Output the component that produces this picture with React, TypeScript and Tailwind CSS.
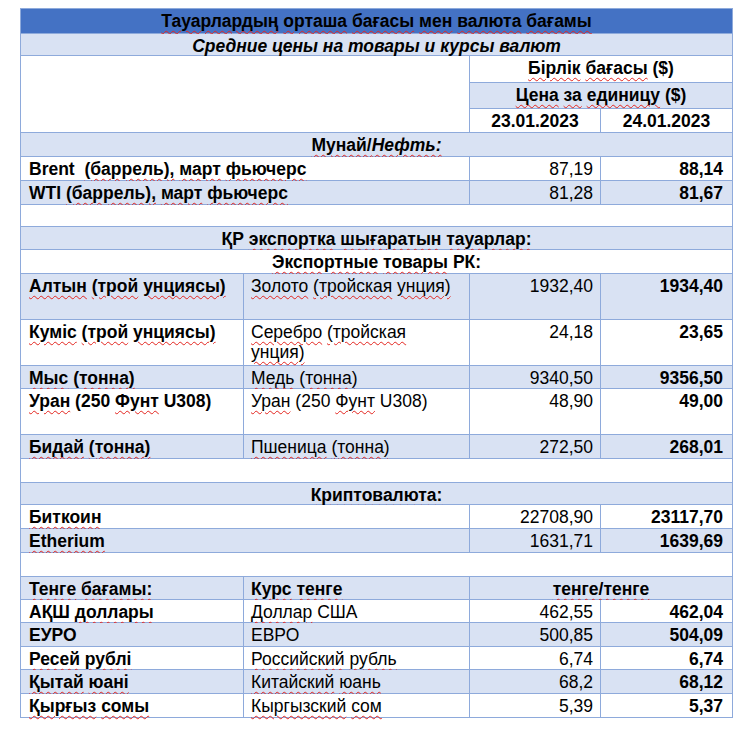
import type { ReactNode } from "react";
import clsx from "clsx";

// Word-style spell-check squiggle under any token that has a lowercase letter
function Sq({ text, plain = false }: { text: string; plain?: boolean }) {
  if (plain) return <>{text}</>;
  const parts = text.split(/(\s+)/);
  return (
    <>
      {parts.map((p, i) =>
        /[a-zа-яёәғқңөұүһі]/.test(p) && p !== "Brent" ? (
          <span
            key={i}
            className="underline decoration-wavy decoration-[#e3251f] decoration-1 underline-offset-[3px]"
          >
            {p}
          </span>
        ) : (
          <span key={i}>{p}</span>
        )
      )}
    </>
  );
}

function Cell({ children, className }: { children?: ReactNode; className?: string }) {
  return (
    <div className={clsx("pt-[2px] leading-[20px] whitespace-pre-wrap text-black", className)}>
      {children}
    </div>
  );
}

const L = "bg-[#d9e2f3]";
const W = "bg-white";

type Row = { a: string; b?: string; c: string; d: string };

function DataRow({ r, bg, span = false }: { r: Row; bg: string; span?: boolean }) {
  return (
    <>
      <Cell className={clsx(bg, "pl-[8px] font-bold", span && "col-span-2")}>
        <Sq text={r.a} />
      </Cell>
      {!span && (
        <Cell className={clsx(bg, "pl-[7px] pr-[10px]")}>
          <Sq text={r.b ?? ""} />
        </Cell>
      )}
      <Cell className={clsx(bg, "pr-[7px] text-right")}>{r.c}</Cell>
      <Cell className={clsx(bg, "pr-[9px] text-right font-bold")}>{r.d}</Cell>
    </>
  );
}

function Band({ text, bg, plain }: { text: string; bg: string; plain?: boolean }) {
  return (
    <Cell className={clsx(bg, "col-span-4 text-center font-bold")}>
      <Sq text={text} plain={plain} />
    </Cell>
  );
}

const goods: { r: Row; bg: string }[] = [
  { r: { a: "Алтын (трой унциясы)", b: "Золото (тройская унция)", c: "1932,40", d: "1934,40" }, bg: L },
  { r: { a: "Куміс (трой унциясы)", b: "Серебро (тройская унция)", c: "24,18", d: "23,65" }, bg: W },
  { r: { a: "Мыс (тонна)", b: "Медь (тонна)", c: "9340,50", d: "9356,50" }, bg: L },
  { r: { a: "Уран (250 Фунт U308)", b: "Уран (250 Фунт U308)", c: "48,90", d: "49,00" }, bg: W },
  { r: { a: "Бидай (тонна)", b: "Пшеница (тонна)", c: "272,50", d: "268,01" }, bg: L },
];

const fx: { r: Row; bg: string }[] = [
  { r: { a: "АҚШ доллары", b: "Доллар США", c: "462,55", d: "462,04" }, bg: W },
  { r: { a: "ЕУРО", b: "ЕВРО", c: "500,85", d: "504,09" }, bg: L },
  { r: { a: "Ресей рублі", b: "Российский рубль", c: "6,74", d: "6,74" }, bg: W },
  { r: { a: "Қытай юані", b: "Китайский юань", c: "68,2", d: "68,12" }, bg: L },
  { r: { a: "Қырғыз сомы", b: "Кыргызский сом", c: "5,39", d: "5,37" }, bg: W },
];

export default function App() {
  return (
    <div className="min-h-[741px] w-[752px] bg-white pt-[8px] pl-[20px] font-['Liberation_Sans',Arial,sans-serif] text-[17.5px]">
      <div className="grid w-[713px] grid-cols-[222px_225px_130px_131px] grid-rows-[24px_21px_26px_25px_23px_23px_23px_23px_21px_22px_23px_45px_45px_22px_45px_23px_23px_21px_23px_23px_23px_22px_22px_23px_22px_23px_23px] gap-px bg-[#8eaadb] p-px">
        <Band text="Тауарлардың орташа бағасы мен валюта бағамы" bg="bg-[#4472c4]" />
        <Cell className={clsx(L, "col-span-4 text-center font-bold italic")}>
          Средние цены на товары и курсы валют
        </Cell>

        {/* header block */}
        <div className="col-span-2 row-span-3 bg-white" />
        <Cell className={clsx(W, "col-span-2 text-center font-bold")}>
          <Sq text="Бірлік бағасы ($)" />
        </Cell>
        <Cell className={clsx(L, "col-span-2 text-center font-bold")}>
          <Sq text="Цена за единицу ($)" />
        </Cell>
        <Cell className={clsx(W, "pt-0 text-center font-bold")}>23.01.2023</Cell>
        <Cell className={clsx(W, "pt-0 text-center font-bold")}>24.01.2023</Cell>

        {/* oil */}
        <Cell className={clsx(L, "col-span-4 text-center font-bold")}>
          <span className="underline decoration-wavy decoration-[#e3251f] decoration-1 underline-offset-[3px]">
            Мунай/<i>Нефть:</i>
          </span>
        </Cell>
        <DataRow r={{ a: "Brent  (баррель), март фьючерс", c: "87,19", d: "88,14" }} bg={W} span />
        <DataRow r={{ a: "WTI (баррель), март фьючерс", c: "81,28", d: "81,67" }} bg={L} span />
        <div className="col-span-4 bg-white" />

        {/* export goods */}
        <Band text="ҚР экспортка шығаратын тауарлар:" bg={L} />
        <Band text="Экспортные товары РК:" bg={W} />
        {goods.map((g, i) => (
          <DataRow key={i} r={g.r} bg={g.bg} />
        ))}
        <div className="col-span-4 bg-white" />

        {/* crypto */}
        <Band text="Криптовалюта:" bg={L} />
        <DataRow r={{ a: "Биткоин", c: "22708,90", d: "23117,70" }} bg={W} span />
        <DataRow r={{ a: "Etherium", c: "1631,71", d: "1639,69" }} bg={L} span />
        <div className="col-span-4 bg-white" />

        {/* tenge rates */}
        <Cell className={clsx(L, "pl-[8px] font-bold")}>
          <Sq text="Тенге бағамы:" />
        </Cell>
        <Cell className={clsx(L, "pl-[7px] font-bold")}>
          <Sq text="Курс тенге" />
        </Cell>
        <Cell className={clsx(L, "col-span-2 text-center font-bold")}>
          <Sq text="тенге/тенге" />
        </Cell>
        {fx.map((g, i) => (
          <DataRow key={i} r={g.r} bg={g.bg} />
        ))}
      </div>
    </div>
  );
}
